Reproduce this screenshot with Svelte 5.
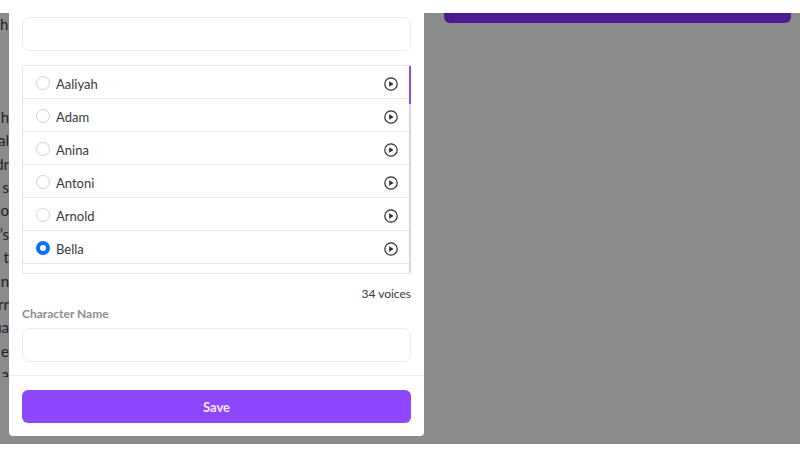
<script lang="ts">
  const voices = ['Aaliyah', 'Adam', 'Anina', 'Antoni', 'Arnold', 'Bella', 'Callum'];
  const total = 34;
  const story = ['h', 'al', 'dr', 's', 'o', '’s', 't', 'n', 'rr', 'ua', 'e', 'a'];

  let selected = $state('Bella');
  let search = $state('');
  let characterName = $state('');
</script>

<div class="page">
  <aside class="story">
    <p class="story-title">h</p>
    <div class="story-view">
      <div class="story-lines">
        {#each story as line}
          <span>{line}</span>
        {/each}
      </div>
    </div>
  </aside>

  <form class="modal" onsubmit={(e) => e.preventDefault()}>
    <div class="modal-body">
      <input class="field" type="text" aria-label="Search voices" bind:value={search} />

      <div class="voices">
        <ul class="voice-list">
          {#each voices as voice (voice)}
            <li class="voice">
              <label class="voice-label">
                <input type="radio" name="voice" value={voice} bind:group={selected} />
                <span>{voice}</span>
              </label>
              <button class="play" type="button" aria-label="Play {voice}">
                <svg viewBox="0 0 14 14" width="14" height="14">
                  <circle cx="7" cy="7" r="6.2" fill="none" stroke="currentColor" stroke-width="1.2" />
                  <path d="M5.2 4.3v5.4L9.6 7z" fill="currentColor" />
                </svg>
              </button>
            </li>
          {/each}
        </ul>
        <div class="track"><div class="thumb"></div></div>
      </div>

      <p class="count">{total} voices</p>

      <label class="field-label" for="character-name">Character Name</label>
      <input class="field" id="character-name" type="text" bind:value={characterName} />
    </div>

    <footer class="modal-footer">
      <button class="save" type="submit">Save</button>
    </footer>
  </form>

  <section class="side">
    <button class="side-action" type="button" aria-label="Generate"></button>
  </section>
</div>

<style>
  :global(body) {
    background: #fff;
    font-family: Lato, "Liberation Sans", sans-serif;
    color: #38383f;
  }

  .page {
    display: grid;
    grid-template-columns: 9px minmax(0, 415fr) minmax(0, 376fr);
    margin-top: 13px;
    padding-bottom: 8px;
    background: #8b8b8b;
  }

  .story {
    display: flex;
    flex-direction: column;
    gap: 70px;
    overflow: hidden;
    font-size: 15px;
    line-height: 23px;
    color: #22222a;
  }
  .story-title { margin: 0; }
  .story-view {
    height: 271px;
    overflow: hidden;
  }
  .story-lines {
    display: flex;
    flex-direction: column;
    align-items: flex-end;
    justify-content: space-between;
    height: 280px;
  }

  .modal {
    background: #fff;
    border-radius: 0 0 4px 4px;
  }
  .modal-body {
    display: flex;
    flex-direction: column;
    padding: 4px 13px 13px;
  }

  .field {
    box-sizing: border-box;
    width: 100%;
    height: 34px;
    padding: 0 12px;
    border: 1px solid #ebebed;
    border-radius: 7px;
    background: #fff;
    font: inherit;
    font-size: 13px;
    outline: none;
  }

  .voices {
    display: flex;
    height: 207px;
    margin-top: 14px;
    border: 1px solid #e6e6e8;
    border-right: 0;
    border-radius: 3px 0 0 3px;
    overflow: hidden;
  }
  .voice-list {
    flex: 1;
    margin: 0;
    padding: 0;
    list-style: none;
  }
  .voice {
    box-sizing: border-box;
    display: flex;
    align-items: center;
    justify-content: space-between;
    height: 33px;
    padding: 0 11px 0 13px;
    border-bottom: 1px solid #e6e6e8;
  }
  .voice-label {
    display: flex;
    align-items: center;
    gap: 6px;
    padding-top: 2px;
    font-size: 13px;
    line-height: 18px;
  }
  .voice-label span { padding-top: 2px; }

  input[type="radio"] {
    appearance: none;
    box-sizing: border-box;
    width: 14px;
    height: 14px;
    margin: 0;
    border: 1px solid #d2d2d5;
    border-radius: 50%;
    background: #fff;
  }
  input[type="radio"]:checked { border: 4px solid #0d6efd; }

  .play {
    display: flex;
    padding: 4px 0 0;
    border: 0;
    background: none;
    color: #2c2c30;
  }

  .track {
    width: 2px;
    background: #d9d9dd;
  }
  .thumb {
    height: 38px;
    background: #8d4bf0;
  }

  .count {
    margin: 10px 0 0;
    font-size: 12px;
    line-height: 20px;
    text-align: right;
  }
  .field-label {
    margin-bottom: 4px;
    font-size: 12px;
    font-weight: 700;
    line-height: 20px;
    color: #8d8d92;
  }

  .modal-footer {
    padding: 14px 13px 13px;
    border-top: 1px solid #ededef;
  }
  .save {
    display: block;
    width: 100%;
    height: 33px;
    border: 0;
    border-radius: 6px;
    background: #8f46ff;
    color: #f3eaff;
    font: inherit;
    font-size: 13px;
    font-weight: 700;
  }

  .side { padding: 0 9px 0 20px; }
  .side-action {
    display: block;
    width: 100%;
    height: 10px;
    padding: 0;
    border: 0;
    border-radius: 0 0 6px 6px;
    background: #4c1a91;
  }
</style>
